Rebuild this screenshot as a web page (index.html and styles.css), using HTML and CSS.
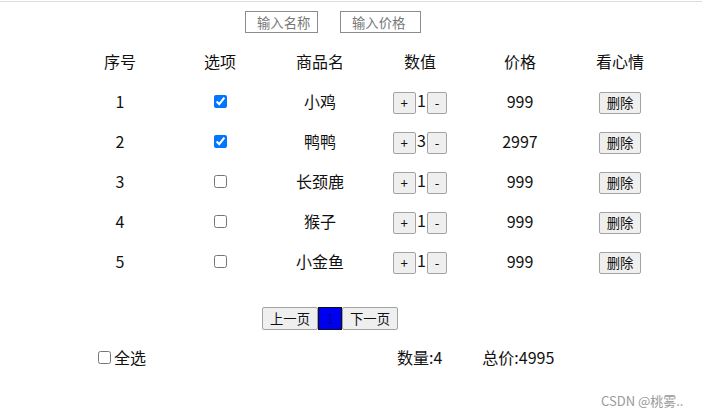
FILE: index.html
```html
<!DOCTYPE html>
<html lang="zh-CN">
<head>
<meta charset="utf-8">
<title>商品列表</title>
<link rel="stylesheet" href="styles.css">
</head>
<body>
<div class="top-line"></div>
<div class="search">
  <input class="inp inp-name" type="text" placeholder="输入名称">
  <input class="inp inp-price" type="text" placeholder="输入价格">
</div>
<table class="goods">
  <thead>
    <tr><th>序号</th><th>选项</th><th>商品名</th><th>数值</th><th>价格</th><th>看心情</th></tr>
  </thead>
  <tbody>
    <tr><td>1</td><td><input type="checkbox" class="chk" checked></td><td>小鸡</td><td><button class="btn">+</button>1<button class="btn">-</button></td><td>999</td><td><button class="btn">删除</button></td></tr>
    <tr><td>2</td><td><input type="checkbox" class="chk" checked></td><td>鸭鸭</td><td><button class="btn">+</button>3<button class="btn">-</button></td><td>2997</td><td><button class="btn">删除</button></td></tr>
    <tr><td>3</td><td><input type="checkbox" class="chk"></td><td>长颈鹿</td><td><button class="btn">+</button>1<button class="btn">-</button></td><td>999</td><td><button class="btn">删除</button></td></tr>
    <tr><td>4</td><td><input type="checkbox" class="chk"></td><td>猴子</td><td><button class="btn">+</button>1<button class="btn">-</button></td><td>999</td><td><button class="btn">删除</button></td></tr>
    <tr><td>5</td><td><input type="checkbox" class="chk"></td><td>小金鱼</td><td><button class="btn">+</button>1<button class="btn">-</button></td><td>999</td><td><button class="btn">删除</button></td></tr>
  </tbody>
</table>
<div class="pager">
  <button class="btn page-btn">上一页</button><span class="page-cur">1</span><button class="btn page-btn">下一页</button>
</div>
<div class="summary">
  <label class="all"><input type="checkbox" class="chk all-chk">全选</label>
  <span class="count">数量:4</span>
  <span class="total">总价:4995</span>
</div>
<div class="watermark">CSDN @桃雾..</div>
</body>
</html>
```

FILE: styles.css
```css
html, body {
  margin: 0;
  padding: 0;
  background: #fff;
}
body {
  position: relative;
  width: 702px;
  height: 417px;
  overflow: hidden;
  font-family: "Noto Sans CJK SC", "Noto Sans", sans-serif;
  font-size: 16px;
  color: #111;
}
.top-line {
  height: 1px;
  margin-top: 1px;
  background: #dcdcdc;
}
.search {
  display: flex;
  gap: 22px;
  padding-left: 245px;
  margin-top: 9px;
}
.inp {
  box-sizing: border-box;
  height: 22px;
  border: 1px solid #8c8c8c;
  padding: 0 0 0 11px;
  font-family: "Noto Sans CJK SC", sans-serif;
  font-size: 13.33px;
  color: #333;
  background: #fff;
  outline: none;
}
.inp::placeholder {
  color: #777;
}
.inp-name { width: 73px; }
.inp-price { width: 81px; }

.goods {
  margin-top: 8px;
  margin-left: 70px;
  width: 600px;
  border-collapse: collapse;
  table-layout: fixed;
}
.goods th, .goods td {
  height: 40px;
  padding: 0;
  text-align: center;
  vertical-align: middle;
  font-weight: normal;
}
.btn {
  font-family: "Noto Sans CJK SC", sans-serif;
  font-size: 13.33px;
  line-height: 18px;
  padding: 1px 7px;
  margin: 0 1px;
  border: 1px solid #a3a3a3;
  border-radius: 2px;
  background: #efefef;
  color: #111;
  vertical-align: middle;
}
.chk {
  width: 13px;
  height: 13px;
  margin: 0;
  vertical-align: middle;
  position: relative;
  top: -2px;
}

.pager {
  display: flex;
  align-items: stretch;
  margin-top: 26px;
  padding-left: 262px;
  height: 23px;
}
.page-btn {
  margin: 0;
  width: 56px;
  padding: 0;
}
.page-cur {
  box-sizing: border-box;
  width: 24px;
  height: 23px;
  background: #0000f0;
  border: 1px solid #111;
  color: #00009a;
  font-size: 13px;
  line-height: 21px;
  text-align: center;
}

.summary {
  display: flex;
  align-items: center;
  height: 20px;
  margin-top: 17px;
}
.all {
  display: flex;
  align-items: center;
  margin-left: 98px;
}
.all-chk {
  top: 0;
  margin-right: 3px;
}
.count {
  margin-left: 251px;
}
.total {
  margin-left: 40px;
}
.watermark {
  position: absolute;
  left: 601px;
  top: 391px;
  font-family: "Noto Sans CJK SC", sans-serif;
  font-size: 13px;
  color: #9a9a9a;
}
```
